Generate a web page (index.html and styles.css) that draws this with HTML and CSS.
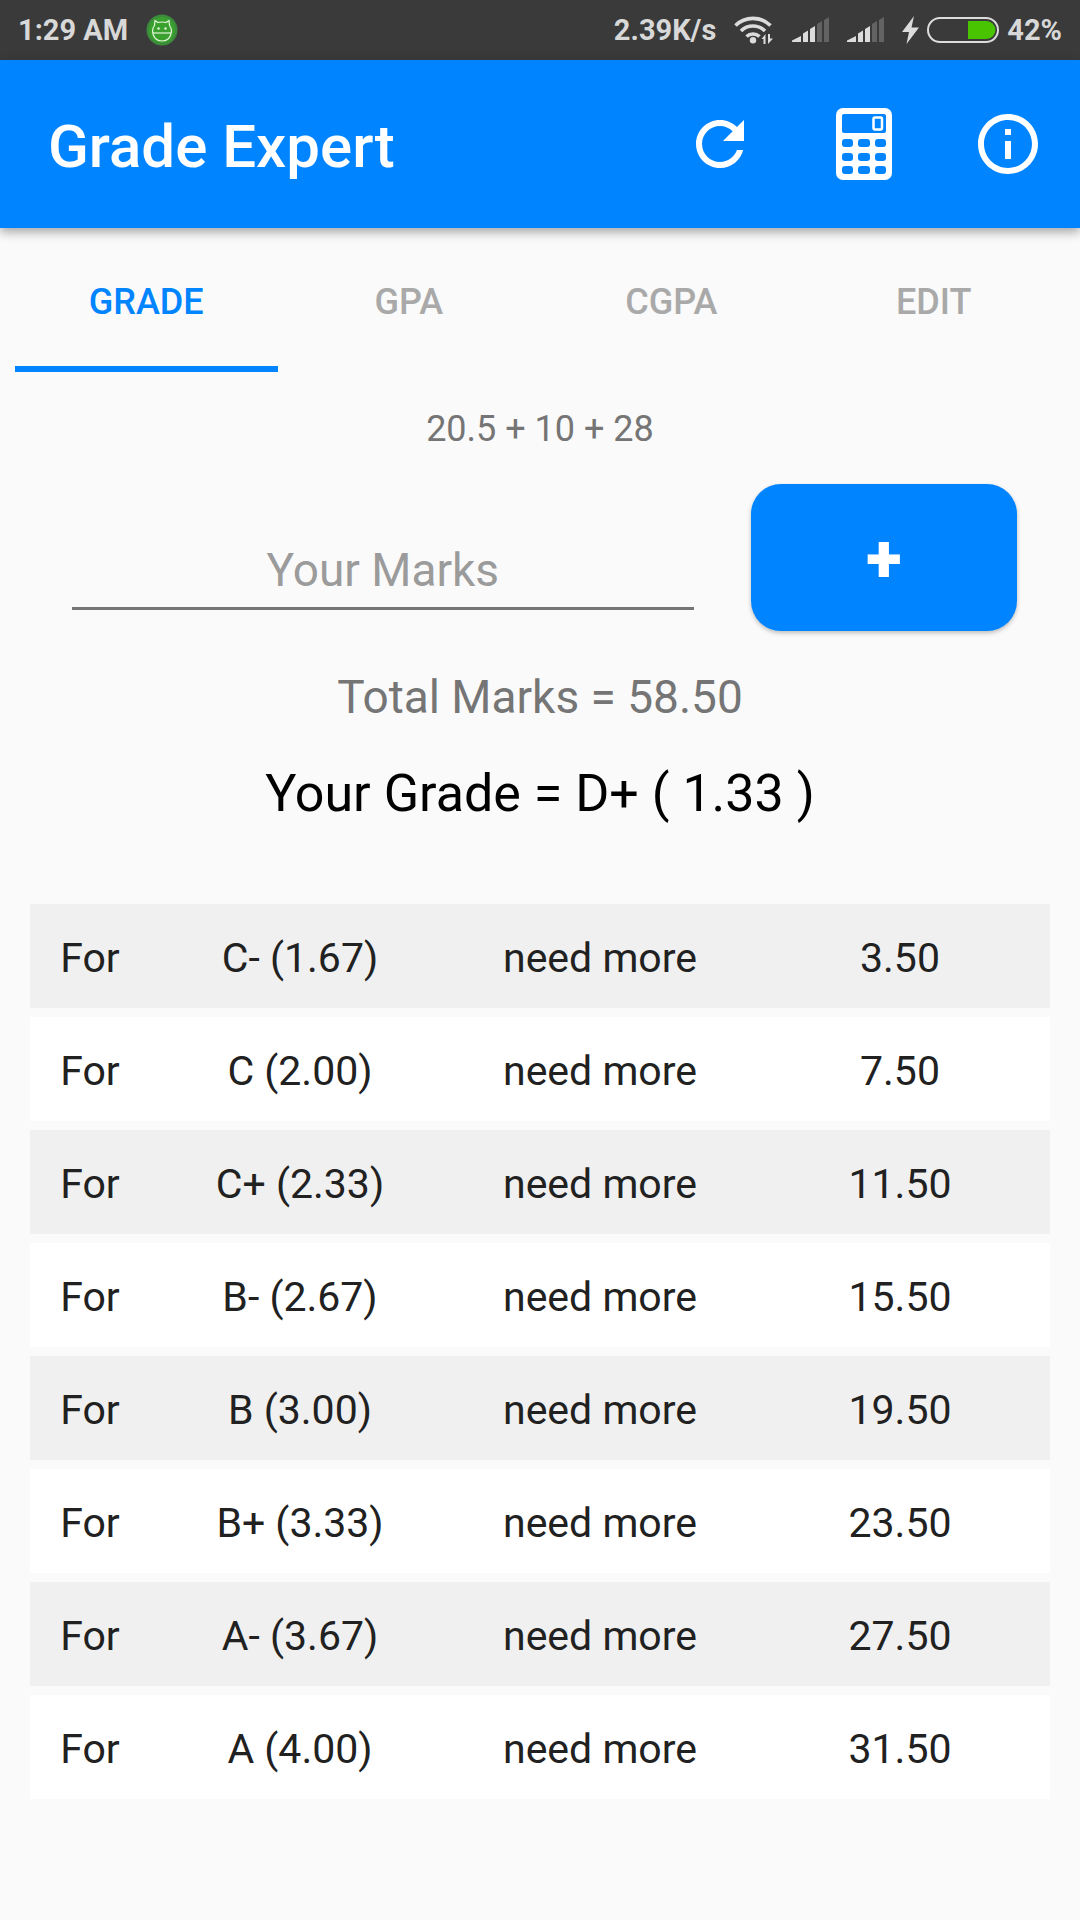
FILE: index.html
```html
<!DOCTYPE html>
<html lang="en">
<head>
    <meta charset="UTF-8">
    <meta name="viewport" content="width=device-width, initial-scale=1.0">
    <title>Grade Expert</title>
    <link rel="stylesheet" href="styles.css">
</head>
<body>
    <div class="status-bar">
        <span>1:29 AM</span>
        <svg class="status-app" width="32" height="32" viewBox="0 0 32 32">
            <circle cx="16" cy="16" r="15.500" fill="#3c8a3c"/>
            <circle cx="16" cy="16" r="13" fill="#3aa02e"/>
            <g fill="none" stroke="#e4f5dc" stroke-width="1.200">
                <path d="M8.500 11.500 L9 6.500 L12 8.500 Q16 7.500 20 8.500 L23 6.500 L23.500 11.500 Q25.500 14 25.500 17 Q24.500 27 16 27 Q7.500 27 6.500 17 Q6.500 14 8.500 11.500Z"/>
                <path d="M6.500 19H25.500"/>
            </g>
            <circle cx="12.500" cy="14.500" r="1.200" fill="#e4f5dc"/>
            <circle cx="19.500" cy="14.500" r="1.200" fill="#e4f5dc"/>
        </svg>
        <span class="status-speed">2.39K/s</span>
        <svg class="status-wifi" width="40" height="28" viewBox="0 0 40 28">
            <g fill="none" stroke="#dcdcdc" stroke-width="3.600">
                <path d="M1.500 9.500 A25 25 0 0 1 36.500 9.500"/>
                <path d="M7 15 A17 17 0 0 1 31 15"/>
                <path d="M12.500 20.500 A9.500 9.500 0 0 1 25.500 20.500"/>
            </g>
            <circle cx="19" cy="24.200" r="3.200" fill="#dcdcdc"/>
            <path d="M28 17 H36 V28 H28Z" fill="#3a3a3a"/>
            <path d="M31.500 28V18L27.500 23H29.500V28Z M34 18V28L39 22.500H36V18Z" fill="#dcdcdc"/>
        </svg>
        <svg class="status-signal" width="37" height="26" viewBox="0 0 37 26">
            <path d="M0 25V23.500L9 19V25Z M11 25V16.500L16 13.500V25Z M18 25V12L23 9V25Z" fill="#dcdcdc"/>
            <path d="M25 25V7L30 4V25Z M32 25V3L37 0V25Z" fill="#636363"/>
        </svg>
        <svg class="status-signal" width="37" height="26" viewBox="0 0 37 26">
            <path d="M0 25V23.500L9 19V25Z M11 25V16.500L16 13.500V25Z M18 25V12L23 9V25Z" fill="#dcdcdc"/>
            <path d="M25 25V7L30 4V25Z M32 25V3L37 0V25Z" fill="#636363"/>
        </svg>
        <svg class="status-bolt" width="17" height="28" viewBox="0 0 17 28">
            <path d="M12 0L0 16H7L4.500 28L17 11.500H9.500Z" fill="#dcdcdc"/>
        </svg>
        <svg class="status-battery" width="72" height="26" viewBox="0 0 72 26">
            <rect x="1" y="1" width="70" height="24" rx="12" fill="none" stroke="#dcdcdc" stroke-width="2"/>
            <path d="M41 4H59.500A9 9 0 0 1 59.500 22H41Z" fill="#48c400"/>
        </svg>
        <span>42%</span>
    </div>

    <header class="app-bar">
        <h1 class="app-title">Grade Expert</h1>
        <button class="icon-button" id="reset" aria-label="Reset">
            <svg width="72" height="72" viewBox="0 0 24 24" fill="#fff">
                <path d="M17.650 6.350C16.200 4.900 14.210 4 12 4c-4.420 0-7.990 3.580-7.990 8s3.570 8 7.990 8c3.730 0 6.840-2.550 7.730-6h-2.080c-.820 2.330-3.040 4-5.650 4-3.310 0-6-2.690-6-6s2.690-6 6-6c1.660 0 3.140.69 4.220 1.780L13 11h7V4l-2.350 2.350z"/>
            </svg>
        </button>
        <button class="icon-button" id="calculator" aria-label="Calculator">
            <svg width="56" height="72" viewBox="0 0 56 72">
                <rect width="56" height="72" rx="7" fill="#fff"/>
                <g fill="#0084ff">
                    <rect x="6" y="6" width="44" height="19" rx="2"/>
                    <rect x="6" y="31" width="11" height="8" rx="3"/>
                    <rect x="22" y="31" width="12" height="8" rx="3"/>
                    <rect x="39" y="31" width="11" height="8" rx="3"/>
                    <rect x="6" y="45" width="11" height="8" rx="3"/>
                    <rect x="22" y="45" width="12" height="8" rx="3"/>
                    <rect x="39" y="45" width="11" height="8" rx="3"/>
                    <rect x="6" y="58" width="11" height="8" rx="3"/>
                    <rect x="22" y="58" width="12" height="8" rx="3"/>
                    <rect x="39" y="58" width="11" height="8" rx="3"/>
                </g>
                <rect x="37.500" y="9.500" width="8.500" height="12" rx="1.500" fill="none" stroke="#fff" stroke-width="2.500"/>
            </svg>
        </button>
        <button class="icon-button" id="info" aria-label="Info">
            <svg width="72" height="72" viewBox="0 0 24 24" fill="#fff">
                <path d="M11 17h2v-6h-2v6zm1-15C6.480 2 2 6.480 2 12s4.480 10 10 10 10-4.480 10-10S17.520 2 12 2zm0 18c-4.410 0-8-3.590-8-8s3.590-8 8-8 8 3.590 8 8-3.590 8-8 8zM11 9h2V7h-2v2z"/>
            </svg>
        </button>
    </header>

    <nav class="tabs">
        <button class="tab active">GRADE</button>
        <button class="tab">GPA</button>
        <button class="tab">CGPA</button>
        <button class="tab">EDIT</button>
    </nav>

    <main>
        <p class="history">20.5 + 10 + 28</p>

        <form class="marks-form">
            <input class="marks-input" type="text" inputmode="decimal" id="marks" aria-label="Your Marks" placeholder="Your Marks">
            <button class="add-button" type="button">+</button>
        </form>

        <p class="total">Total Marks = 58.50</p>
        <p class="grade">Your Grade = D+ ( 1.33 )</p>

        <table class="needed">
            <tr><td class="for">For</td><td>C- (1.67)</td><td>need more</td><td>3.50</td></tr>
            <tr><td class="for">For</td><td>C (2.00)</td><td>need more</td><td>7.50</td></tr>
            <tr><td class="for">For</td><td>C+ (2.33)</td><td>need more</td><td>11.50</td></tr>
            <tr><td class="for">For</td><td>B- (2.67)</td><td>need more</td><td>15.50</td></tr>
            <tr><td class="for">For</td><td>B (3.00)</td><td>need more</td><td>19.50</td></tr>
            <tr><td class="for">For</td><td>B+ (3.33)</td><td>need more</td><td>23.50</td></tr>
            <tr><td class="for">For</td><td>A- (3.67)</td><td>need more</td><td>27.50</td></tr>
            <tr><td class="for">For</td><td>A (4.00)</td><td>need more</td><td>31.50</td></tr>
        </table>
    </main>
</body>
</html>
```
FILE: styles.css
```css
* {
    box-sizing: border-box;
}
body {
    margin: 0;
    background-color: #fafafa;
    font-family: Roboto, sans-serif;
    color: #212121;
}
button {
    border: none;
    padding: 0;
    background: none;
    font-family: inherit;
    cursor: pointer;
}
p {
    margin: 0;
    text-align: center;
}

/* status bar */
.status-bar {
    display: flex;
    align-items: center;
    height: 60px;
    padding: 0 18px;
    background-color: #3a3a3a;
    color: #d8d8d8;
    font-size: 29px;
    font-weight: 700;
}
.status-app {
    margin-left: 18px;
}
.status-speed {
    margin-left: auto;
}
.status-wifi,
.status-signal,
.status-bolt {
    margin-left: 18px;
}
.status-battery {
    margin: 0 8px;
}

/* app bar */
.app-bar {
    display: flex;
    align-items: center;
    height: 168px;
    padding-left: 48px;
    background-color: #0084ff;
    box-shadow: 0 4px 10px rgba(0, 0, 0, 0.35);
}
.app-title {
    flex: 1;
    margin: 0;
    padding-top: 4px;
    color: #fff;
    font-size: 60px;
    font-weight: 500;
}
.icon-button {
    display: flex;
    align-items: center;
    justify-content: center;
    width: 144px;
    height: 144px;
}

/* tabs */
.tabs {
    display: flex;
    height: 144px;
    padding: 0 15px;
}
.tab {
    flex: 1;
    padding-top: 10px;
    border-bottom: 6px solid transparent;
    color: #a9a9a9;
    font-size: 36px;
    font-weight: 500;
}
.tab.active {
    color: #0084ff;
    border-bottom-color: #0084ff;
}

/* marks */
.history {
    padding: 36px 0 34px;
    color: #757575;
    font-size: 36px;
    line-height: 42px;
}
.marks-form {
    display: flex;
    align-items: center;
    gap: 57px;
    padding: 0 63px 0 72px;
}
.marks-input {
    flex: 7;
    min-width: 0;
    padding: 39px 0 11px;
    border: none;
    border-bottom: 3px solid #757575;
    background: none;
    font-family: inherit;
    font-size: 46px;
    line-height: 52px;
    height: 105px;
    text-align: center;
    color: #212121;
    outline: none;
}
.marks-input::placeholder {
    color: #9b9b9b;
}
.add-button {
    flex: 3;
    height: 147px;
    padding-top: 4px;
    border-radius: 30px;
    background-color: #0084ff;
    box-shadow: 0 2px 4px rgba(0, 0, 0, 0.25);
    color: #fff;
    font-size: 66px;
    font-weight: 900;
}
.total {
    margin-top: 40px;
    color: #757575;
    font-size: 46px;
    line-height: 52px;
}
.grade {
    margin-top: 40px;
    color: #000;
    font-size: 52px;
    line-height: 62px;
}

/* marks needed for each grade */
.needed {
    width: calc(100% - 60px);
    margin: 70px 30px 0;
    table-layout: fixed;
    border-collapse: separate;
    border-spacing: 0 9px;
}
.needed tr {
    background-color: #fff;
}
.needed tr:nth-child(odd) {
    background-color: #f0f0f0;
}
.needed td {
    height: 104px;
    padding: 4px 0 0;
    text-align: center;
    font-size: 41px;
}
.needed .for {
    width: 120px;
}
```
